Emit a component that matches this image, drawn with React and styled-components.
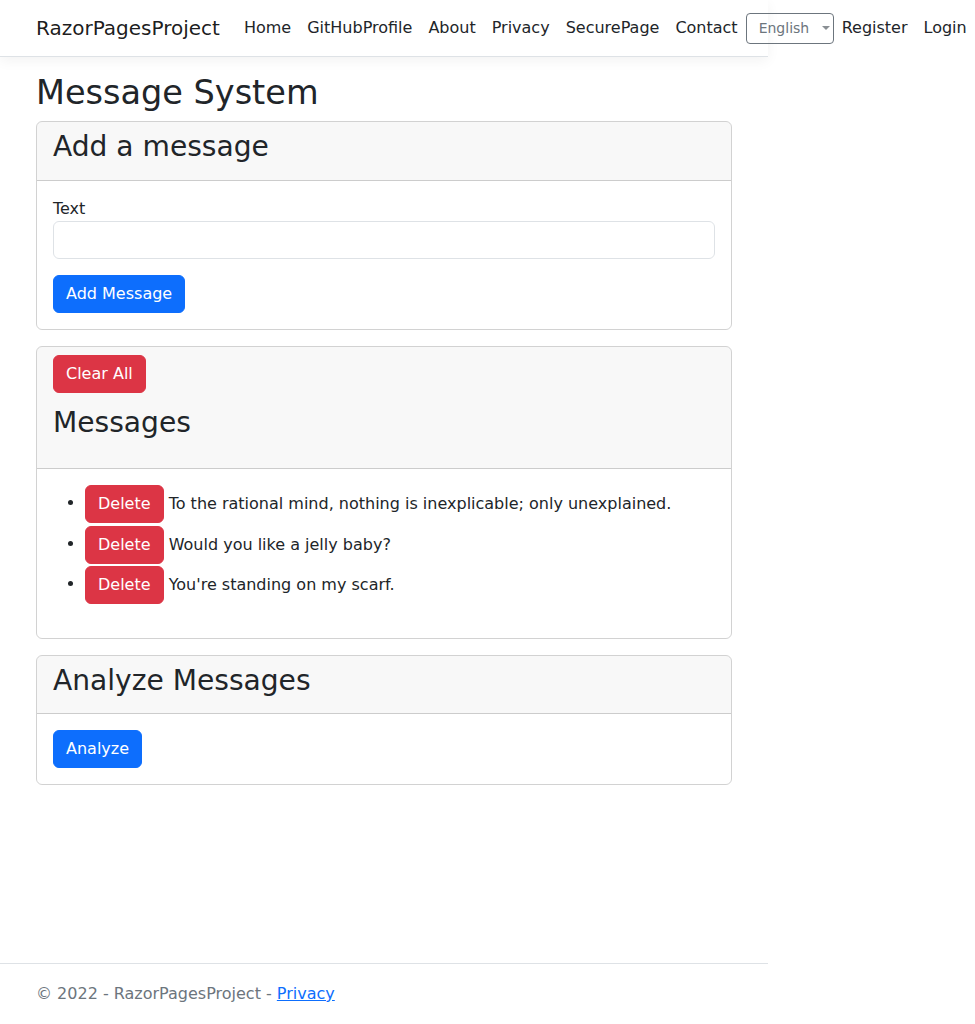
import React from 'react';
import styled, { createGlobalStyle } from 'styled-components';

const GlobalStyle = createGlobalStyle`
    html, body {
        margin:0;
        padding:0;
        overflow-x:hidden;
    }
    body {
        font-family:"DejaVu Sans", "Liberation Sans", sans-serif;
        font-size:16px;
        line-height:1.5;
        color:#212529;
        background-color:#fff;
    }
    *, *::before, *::after {
        box-sizing:border-box;
    }
`;

const messages = [
    'To the rational mind, nothing is inexplicable; only unexplained.',
    'Would you like a jelly baby?',
    "You're standing on my scarf.",
];

const navLinks = ['Home', 'GitHubProfile', 'About', 'Privacy', 'SecurePage', 'Contact'];

const App = () => {
    return (
        <Page>
            <GlobalStyle />
            <Navbar>
                <NavInner>
                    <Brand>RazorPagesProject</Brand>
                    {navLinks.map((link) => (
                        <NavLink key={link}>{link}</NavLink>
                    ))}
                    <LangSelect>
                        English
                        <Caret />
                    </LangSelect>
                    <NavLink>Register</NavLink>
                    <NavLink>Login</NavLink>
                </NavInner>
            </Navbar>

            <Main>
                <Title>Message System</Title>

                <Card>
                    <CardHeader>
                        <CardTitle>Add a message</CardTitle>
                    </CardHeader>
                    <CardBody>
                        <Label>Text</Label>
                        <Input type="text" />
                        <Button variant="primary">Add Message</Button>
                    </CardBody>
                </Card>

                <Card>
                    <CardHeader>
                        <Button variant="danger">Clear All</Button>
                        <CardTitle spaced>Messages</CardTitle>
                    </CardHeader>
                    <CardBody>
                        <MessageList>
                            {messages.map((text) => (
                                <MessageItem key={text}>
                                    <Button variant="danger">Delete</Button> {text}
                                </MessageItem>
                            ))}
                        </MessageList>
                    </CardBody>
                </Card>

                <Card>
                    <CardHeader>
                        <CardTitle>Analyze Messages</CardTitle>
                    </CardHeader>
                    <CardBody>
                        <Button variant="primary">Analyze</Button>
                    </CardBody>
                </Card>
            </Main>

            <Footer>
                <FooterInner>
                    © 2022 - RazorPagesProject - <FooterLink>Privacy</FooterLink>
                </FooterInner>
            </Footer>
        </Page>
    );
};

export default App;

const Page = styled.div`
    width:768px;
    min-height:100vh;
    display:flex;
    flex-direction:column;
`;

const Navbar = styled.nav`
    padding:8px 0;
    background-color:#fff;
    border-bottom:1px solid #dee2e6;
    box-shadow:0 4px 12px rgba(0,0,0,.05);
    margin-bottom:16px;
`;

const NavInner = styled.div`
    width:720px;
    margin:0 auto;
    padding:0 12px;
    display:flex;
    align-items:center;
    white-space:nowrap;
    & > * {
        flex-shrink:0;
    }
`;

const Brand = styled.a`
    font-size:20px;
    line-height:30px;
    padding:5px 0;
    margin-right:16px;
    color:rgba(0,0,0,.9);
`;

const NavLink = styled.a`
    padding:8px;
    font-size:16px;
    line-height:24px;
    color:#212529;
`;

const LangSelect = styled.div`
    display:flex;
    align-items:center;
    width:88px;
    height:31px;
    padding:0 0 0 12px;
    border:1px solid #6c757d;
    border-radius:4px;
    font-size:14px;
    color:#6c757d;
`;

const Caret = styled.span`
    width:0;
    height:0;
    margin-left:13px;
    border-top:4px solid #8a8f94;
    border-left:4px solid transparent;
    border-right:4px solid transparent;
`;

const Main = styled.main`
    width:720px;
    margin:0 auto;
    padding:0 12px 16px;
    flex:1;
`;

const Title = styled.h1`
    font-size:33.52px;
    font-weight:500;
    line-height:1.2;
    margin:0 0 8px;
`;

const Card = styled.section`
    border:1px solid rgba(0,0,0,.175);
    border-radius:6px;
    margin-bottom:16px;
    overflow:hidden;
`;

const CardHeader = styled.div`
    padding:8px 16px;
    background-color:rgba(33,37,41,.03);
    border-bottom:1px solid rgba(0,0,0,.175);
`;

const CardTitle = styled.h2`
    font-size:28.11px;
    font-weight:500;
    line-height:1.2;
    margin:${(props) => (props.spaced ? '13px 0 20px' : '0 0 8px')};
`;

const CardBody = styled.div`
    padding:16px;
`;

const Label = styled.label`
    display:block;
`;

const Input = styled.input`
    display:block;
    width:100%;
    height:38px;
    padding:6px 12px;
    margin-bottom:16px;
    font-family:inherit;
    font-size:16px;
    line-height:24px;
    color:#212529;
    border:1px solid #dee2e6;
    border-radius:6px;
`;

const Button = styled.button`
    display:inline-block;
    padding:6px 12px;
    font-family:inherit;
    font-size:16px;
    line-height:24px;
    color:#fff;
    border:1px solid ${(props) => (props.variant === 'danger' ? '#dc3545' : '#0d6efd')};
    border-radius:6px;
    background-color:${(props) => (props.variant === 'danger' ? '#dc3545' : '#0d6efd')};
    vertical-align:middle;
`;

const MessageList = styled.ul`
    margin:0 0 17px;
    padding-left:32px;
`;

const MessageItem = styled.li`
    line-height:24px;
    padding:0 0 2px;
    &:nth-child(n+2) {
        padding-top:1px;
        padding-bottom:1px;
    }
`;

const Footer = styled.footer`
    border-top:1px solid #dee2e6;
    line-height:60px;
    color:#6c757d;
    white-space:nowrap;
`;

const FooterInner = styled.div`
    width:720px;
    margin:0 auto;
    padding:0 12px;
`;

const FooterLink = styled.a`
    color:#0d6efd;
    text-decoration:underline;
`;
